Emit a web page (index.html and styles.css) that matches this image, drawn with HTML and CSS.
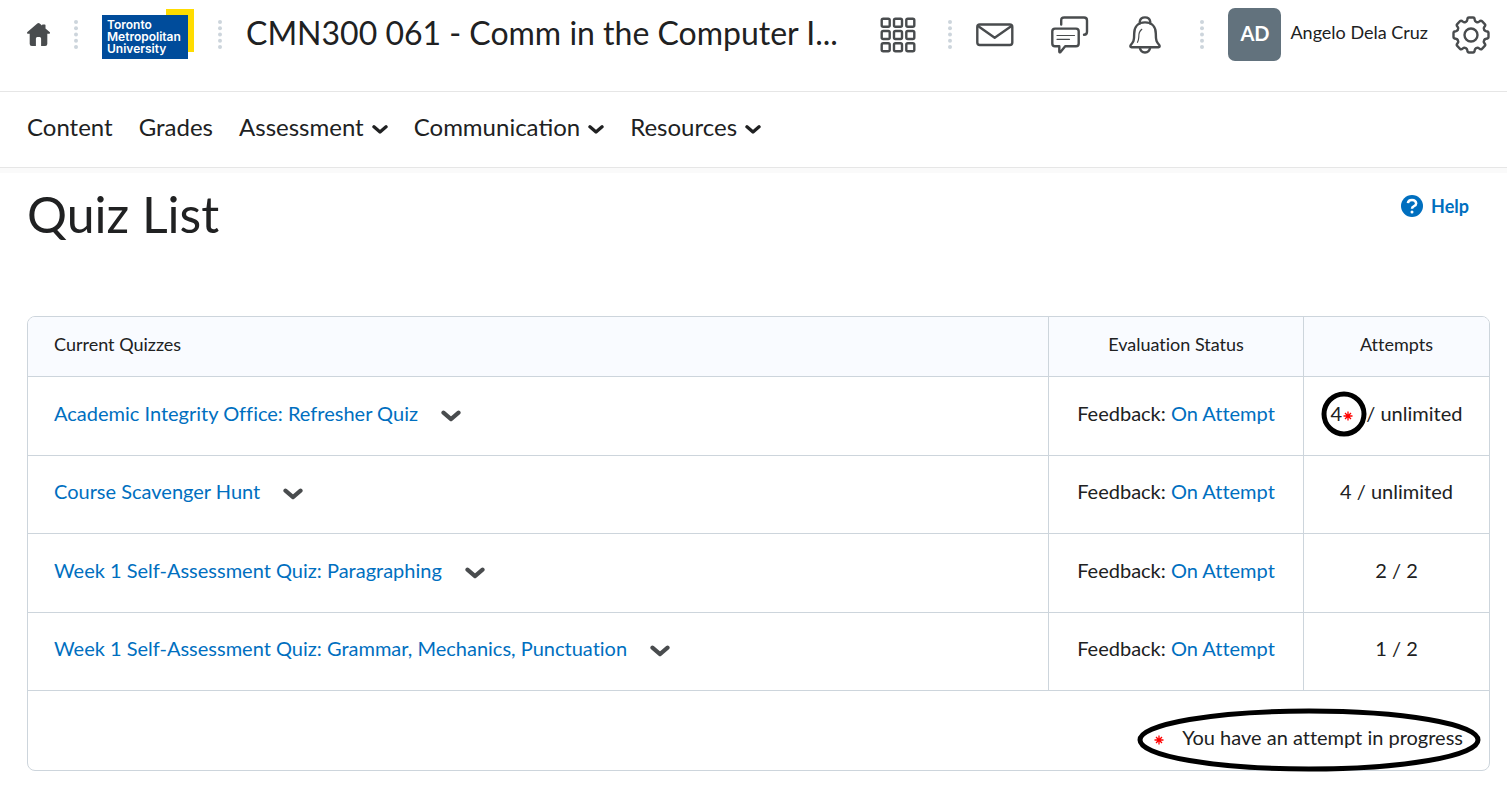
FILE: index.html
```html
<!DOCTYPE html>
<html lang="en">
<head>
<meta charset="utf-8">
<title>Quiz List - CMN300 061</title>
<link rel="stylesheet" href="styles.css">
</head>
<body>
<svg class="defs" width="0" height="0" aria-hidden="true">
  <symbol id="chevron" viewBox="0 0 18 12"><path d="M2.200 3 9 8.800 15.800 3" fill="none" stroke="currentColor" stroke-width="3.700" stroke-linecap="round" stroke-linejoin="round"/></symbol>
  <symbol id="dots" viewBox="0 0 4 29"><g fill="#cdd5dc"><circle cx="2" cy="2" r="2"/><circle cx="2" cy="8.200" r="2"/><circle cx="2" cy="14.500" r="2"/><circle cx="2" cy="20.800" r="2"/><circle cx="2" cy="27" r="2"/></g></symbol>
  <symbol id="star" viewBox="-5 -5 10 10"><path d="M0-4.500V4.500M-4.500 0H4.500M-3-3 3 3M3-3-3 3" fill="none" stroke="#f00" stroke-width="1.300"/></symbol>
</svg>

<header class="header">
  <a class="icon-link" href="#" aria-label="My Home">
    <svg width="23" height="23" viewBox="0 0 23 23"><path fill="#494c4e" d="M10.300.6a1.800 1.800 0 0 1 2.400 0L15 2.500V2.300q0-.7.7-.7h2.100q.7 0 .7.700v3.200L22.600 9q.7.700.3 1.200-.3.600-1.200.6H20.300v10.100q0 2.100-2.100 2.100H14.100V15.600q0-1.500-1.400-1.500H10.300q-1.400 0-1.400 1.500V23H4.800q-2.100 0-2.100-2.100V10.800H1.300q-.9 0-1.200-.6Q-.2 9.600.4 9Z"/></svg>
  </a>
  <svg class="dots"><use href="#dots"/></svg>
  <a class="logo" href="#"><span class="logo-text">Toronto<br>Metropolitan<br>University</span></a>
  <svg class="dots"><use href="#dots"/></svg>
  <a class="course" href="#">CMN300 061 - Comm in the Computer I...</a>
  <div class="tools">
    <button class="icon-button apps" aria-label="Select a course">
      <svg width="36" height="36" viewBox="0 0 36 36" fill="none" stroke="#494c4e" stroke-width="2.400"><g id="apps-row"><rect x="1.700" y="1.700" width="8" height="8" rx="1.500"/><rect x="14" y="1.700" width="8" height="8" rx="1.500"/><rect x="26.300" y="1.700" width="8" height="8" rx="1.500"/></g><use href="#apps-row" y="12.300"/><use href="#apps-row" y="24.600"/></svg>
    </button>
    <svg class="dots"><use href="#dots"/></svg>
    <div class="alerts">
      <button class="icon-button" aria-label="Message alerts">
        <svg width="38" height="38" viewBox="0 0 38 38" fill="none" stroke="#494c4e" stroke-width="2.400" stroke-linejoin="round"><rect x="1.300" y="8.500" width="35" height="20.500" rx="2.500"/><path d="M2 10 18.700 21.700 35.500 10"/></svg>
      </button>
      <button class="icon-button" aria-label="Subscription alerts">
        <svg width="38" height="38" viewBox="0 0 38 38" fill="none" stroke="#494c4e" stroke-width="2.400" stroke-linecap="round" stroke-linejoin="round"><path d="M10.200 8.500V4.500q0-3 3-3H33q3 0 3 3V15.700q0 3-3 3"/><path d="M4 12.600H25q2.700 0 2.700 2.700V27.500q0 2.700-2.700 2.700H14.200L9.300 36.200Q8.300 36.800 8.300 35.500V30.200H4q-2.700 0-2.700-2.700V15.300Q1.300 12.600 4 12.600Z"/><path stroke-width="1.200" d="M6 19.500H23.500M6 23.300H18.500"/></svg>
      </button>
      <button class="icon-button" aria-label="Update alerts">
        <svg width="38" height="38" viewBox="0 0 38 38" fill="none" stroke="#494c4e" stroke-width="2.400" stroke-linecap="round" stroke-linejoin="round"><path d="M13.800 7.600V5.500Q14.500 1.400 19 1.400T24.200 5.500V7.600"/><path d="M19 6.400C11.500 6.400 8.200 11.500 8.200 17.500 8.200 25 7.500 26 4.600 29.300Q3.800 31.200 5.500 31.200H32.500Q34.200 31.200 33.400 29.300C30.500 26 29.800 25 29.800 17.500 29.800 11.500 26.500 6.400 19 6.400Z"/><path d="M13.800 31.400Q14.500 36.500 19 36.500T24.200 31.400"/><path stroke-width="1.200" d="M15.800 13.300Q12.500 16 12.800 21 12.600 24.500 11.500 26.300"/></svg>
      </button>
    </div>
    <svg class="dots"><use href="#dots"/></svg>
    <button class="user"><span class="avatar">AD</span><span class="user-name">Angelo Dela Cruz</span></button>
    <button class="icon-button" aria-label="Admin tools">
      <svg width="38" height="38" viewBox="-19 -19 38 38" fill="none" stroke="#494c4e" stroke-width="2.400" stroke-linecap="round" stroke-linejoin="round"><circle r="6.500"/><g id="teeth"><path id="cog" d="M-5.430-13.100Q-3.900-13.400-3.700-15.200-3.600-17.500-2-17.500H2Q3.600-17.500 3.700-15.200 3.900-13.400 5.430-13.100"/><use href="#cog" transform="rotate(45)"/><use href="#cog" transform="rotate(90)"/><use href="#cog" transform="rotate(135)"/></g><use href="#teeth" transform="rotate(180)"/></svg>
    </button>
  </div>
</header>

<nav class="nav" aria-label="Course">
  <a href="#">Content</a>
  <a href="#">Grades</a>
  <button>Assessment <svg class="nav-chevron"><use href="#chevron"/></svg></button>
  <button>Communication <svg class="nav-chevron"><use href="#chevron"/></svg></button>
  <button>Resources <svg class="nav-chevron"><use href="#chevron"/></svg></button>
</nav>

<main class="main">
  <div class="heading">
    <h1>Quiz List</h1>
    <a class="help" href="#">
      <svg width="22" height="22" viewBox="0 0 22 22" fill="none"><circle cx="11" cy="11" r="11" fill="#006fbf"/><path d="M6.900 8.200Q7.200 4.900 11 4.900T15.200 8.300Q15.200 10.200 13 11.100 11 11.900 11 13.800" stroke="#fff" stroke-width="2.500"/><circle cx="11" cy="17" r="1.500" fill="#fff"/></svg>
      Help
    </a>
  </div>

  <table class="quizzes">
    <thead>
      <tr><th class="name">Current Quizzes</th><th class="status">Evaluation Status</th><th class="attempts">Attempts</th></tr>
    </thead>
    <tbody>
      <tr>
        <td class="name"><div class="quiz"><a href="#">Academic Integrity Office: Refresher Quiz</a><button class="menu" aria-label="Actions for Academic Integrity Office: Refresher Quiz"><svg><use href="#chevron"/></svg></button></div></td>
        <td class="status">Feedback: <a href="#">On Attempt</a></td>
        <td class="attempts"><span class="marked">4<svg class="star"><use href="#star"/></svg><svg class="ring" viewBox="0 0 46 46"><circle cx="23" cy="23" r="20"/></svg></span> / unlimited</td>
      </tr>
      <tr>
        <td class="name"><div class="quiz"><a href="#">Course Scavenger Hunt</a><button class="menu" aria-label="Actions for Course Scavenger Hunt"><svg><use href="#chevron"/></svg></button></div></td>
        <td class="status">Feedback: <a href="#">On Attempt</a></td>
        <td class="attempts">4 / unlimited</td>
      </tr>
      <tr>
        <td class="name"><div class="quiz"><a href="#">Week 1 Self-Assessment Quiz: Paragraphing</a><button class="menu" aria-label="Actions for Week 1 Self-Assessment Quiz: Paragraphing"><svg><use href="#chevron"/></svg></button></div></td>
        <td class="status">Feedback: <a href="#">On Attempt</a></td>
        <td class="attempts">2 / 2</td>
      </tr>
      <tr>
        <td class="name"><div class="quiz"><a href="#">Week 1 Self-Assessment Quiz: Grammar, Mechanics, Punctuation</a><button class="menu" aria-label="Actions for Week 1 Self-Assessment Quiz: Grammar, Mechanics, Punctuation"><svg><use href="#chevron"/></svg></button></div></td>
        <td class="status">Feedback: <a href="#">On Attempt</a></td>
        <td class="attempts">1 / 2</td>
      </tr>
    </tbody>
    <tfoot>
      <tr><td class="legend" colspan="3"><span class="legend-note"><svg class="star"><use href="#star"/></svg>You have an attempt in progress<svg class="oval" viewBox="0 0 344 64"><ellipse cx="172" cy="32" rx="169" ry="29"/></svg></span></td></tr>
    </tfoot>
  </table>
</main>
</body>
</html>
```
FILE: styles.css
```css
* { box-sizing: border-box; }

body {
  margin: 0;
  background: #fff;
  color: #202122;
  font-family: Lato, "Liberation Sans", sans-serif;
  font-size: 20px;
  line-height: 28px;
}

a { color: #006fbf; text-decoration: none; }

button {
  padding: 0;
  border: 0;
  background: none;
  color: inherit;
  font: inherit;
  cursor: pointer;
}

svg { display: block; flex: none; }
.defs { position: absolute; }

/* Top bar */
.header {
  display: flex;
  align-items: center;
  gap: 24px;
  padding: 8px 17px 30px 27px;
  border-bottom: 1px solid #e6e6e6;
}

.dots { width: 4px; height: 29px; }

.logo {
  flex: none;
  width: 92px;
  margin-bottom: 2px;
  padding: 6px 6px 0 0;
  background: linear-gradient(#ffdc00, #ffdc00) right top / 28px 43px no-repeat;
}

.logo-text {
  display: block;
  height: 44px;
  padding: 4px 0 0 5px;
  background: #004c9b;
  color: #fff;
  font: 600 12px/12px Inter, sans-serif;
}

.course {
  flex: 1;
  min-width: 0;
  padding-bottom: 4px;
  overflow: hidden;
  color: #202122;
  font-size: 32px;
  line-height: 40px;
  white-space: nowrap;
  text-overflow: ellipsis;
}

.tools { display: flex; align-items: center; gap: 24px; }
.apps { margin-right: 8px; }
.alerts { display: flex; gap: 37px; margin-right: 12px; }

.user {
  display: flex;
  align-items: center;
  gap: 9px;
  font-size: 18px;
  white-space: nowrap;
}

.user-name { padding-bottom: 5px; }

.avatar {
  width: 53px;
  padding-bottom: 3px;
  border-radius: 7px;
  background: #62727d;
  color: #fff;
  font-size: 20px;
  font-weight: 700;
  line-height: 50px;
  text-align: center;
}

/* Course navigation */
.nav {
  display: flex;
  align-items: center;
  gap: 26px;
  padding: 17px 27px 22px;
  border-bottom: 1px solid #e6e6e6;
  box-shadow: 0 5px 0 #fafafa;
  font-size: 24px;
  line-height: 36px;
}

.nav a { color: #202122; }
.nav button { display: flex; align-items: center; gap: 8px; }
.nav-chevron { width: 16px; height: 11px; margin-top: 5px; }

/* Page */
.main { padding: 16px 17px 26px 27px; }

.heading {
  display: flex;
  justify-content: space-between;
  align-items: flex-start;
  margin-bottom: 72px;
}

h1 {
  margin: 0;
  font-size: 50px;
  font-weight: 400;
  line-height: 60px;
}

.help {
  display: flex;
  align-items: center;
  gap: 8px;
  margin: 8px 21px 0 0;
  font-size: 18px;
  font-weight: 700;
}

.quizzes {
  width: 100%;
  border: 1px solid #cdd5dc;
  border-radius: 8px;
  border-spacing: 0;
  font-variant-ligatures: none;
}

.quizzes th {
  height: 60px;
  padding: 0 26px 5px;
  border-bottom: 1px solid #cdd5dc;
  background: #f9fbff;
  font-size: 18px;
  font-weight: 400;
  line-height: 24px;
}

.quizzes td {
  height: 79px;
  padding: 0 26px 7px;
  border-bottom: 1px solid #cdd5dc;
}

.quizzes tr:nth-child(even) td { height: 78px; }

.quizzes .name { text-align: left; }

.quizzes .status,
.quizzes .attempts {
  border-left: 1px solid #cdd5dc;
  text-align: center;
  white-space: nowrap;
}

.quizzes .status { width: 255px; }
.quizzes .attempts { width: 186px; padding-left: 8px; padding-right: 8px; }
.quizzes th:first-child { border-top-left-radius: 7px; }
.quizzes th:last-child { border-top-right-radius: 7px; }

.quiz { display: flex; align-items: center; gap: 23px; }
.menu { color: #494c4e; }
.menu svg { width: 20px; height: 14px; margin-top: 6px; }

.star { display: inline-block; width: 10px; height: 10px; }

.marked,
.legend-note { position: relative; }

.marked .star { margin: 0 8px 0 1px; }
.legend-note .star { margin-right: 18px; }

.ring,
.oval { position: absolute; fill: none; stroke: #000; stroke-width: 5px; }

.ring { left: -10px; top: -10px; width: 46px; height: 46px; }
.oval { right: -18px; top: -17px; width: 344px; height: 64px; }

.quizzes .legend {
  border-bottom: 0;
  padding-top: 20px;
  text-align: right;
}
```
